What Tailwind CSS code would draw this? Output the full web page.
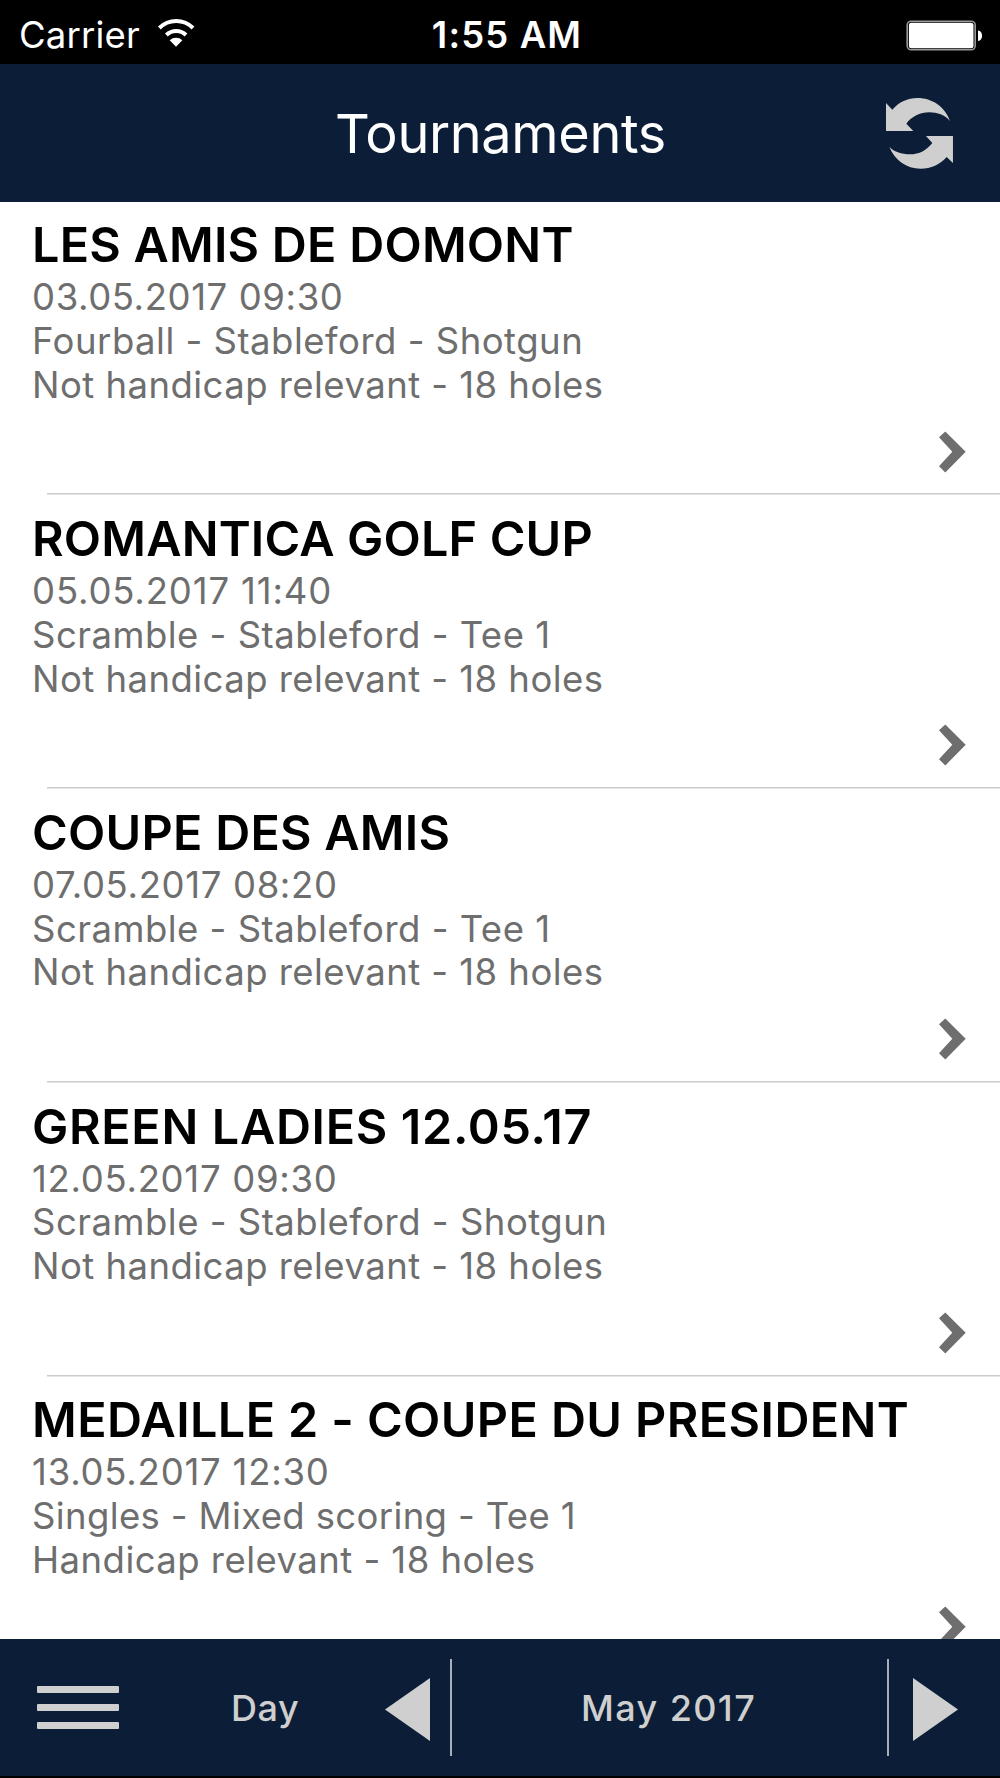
<!DOCTYPE html>
<html lang="en">
<head>
  <meta charset="UTF-8" />
  <meta name="viewport" content="width=device-width, initial-scale=1.0">
  <title>Tournaments</title>
  <script src="https://cdn.jsdelivr.net/npm/@tailwindcss/browser@4"></script>
</head>
<body class="bg-black">
  <div class="w-[1000px] h-[1778px] flex flex-col overflow-hidden bg-black font-['Inter','Liberation_Sans',sans-serif]">

    <!-- status bar -->
    <div class="h-16 shrink-0 grid grid-cols-[1fr_auto_1fr] items-center pl-[19px] pr-[17px] pb-[2px] text-white text-[36.5px] leading-[62px]">
      <div class="flex items-center gap-[17px]">
        <span class="tracking-[0.2px] pt-1">Carrier</span>
        <svg class="w-[38.7px] h-[29.3px]" viewBox="20 22 116 88" fill="none" stroke="#fff" stroke-width="12">
          <path d="M27 52A71 71 0 0 1 128 52" />
          <path d="M48 73A42 42 0 0 1 107 73" />
          <path d="M58 89A28 28 0 0 1 96 89L77 108Z" fill="#fff" stroke="none" />
        </svg>
      </div>
      <span class="font-semibold tracking-[1.13px] pt-1 ml-3">1:55 AM</span>
      <svg class="w-[77px] h-[31px] justify-self-end mt-1" viewBox="0 0 77 31">
        <rect x="1.2" y="1.2" width="68" height="28.6" rx="4" fill="none" stroke="#999" stroke-width="1.6" />
        <rect x="2.9" y="2.7" width="64.6" height="25.6" rx="2.5" fill="#fff" />
        <path d="M72 10.500C77.500 11 77.500 20.500 72 21Z" fill="#fff" />
      </svg>
    </div>

    <!-- title bar -->
    <header class="h-[137.5px] shrink-0 grid grid-cols-[1fr_auto_1fr] items-center pl-[47px] pr-[47px] bg-[#0c1e37]">
      <span></span>
      <h1 class="text-white text-[54px] leading-[64px] tracking-[-0.35px] ml-[1px] pt-[1.5px]">Tournaments</h1>
      <svg class="w-[67.3px] h-[71px] justify-self-end mt-[2px]" viewBox="78 54 202 213" fill="#cfcfcf">
        <path d="M78 69L97 89C118 66 142 54 173 54C215 54 255 79 270 123C255 105 232 97 208 97C180 97 155 110 139 131L160 153H78Z" />
        <path d="M279 249L260 231C240 254 213 266 182 266C140 266 103 240 88 200C100 214 125 223 150 223C178 223 200 211 217 189L198 168H279Z" />
      </svg>
    </header>

    <main id="list" class="h-[1437.5px] shrink-0 overflow-hidden bg-white"></main>

    <!-- toolbar -->
    <footer class="h-[137px] shrink-0 flex items-center bg-[#0c1e37] text-[#cfcfcf] text-[36px] font-medium">
      <div class="ml-[37px] w-[82px] flex flex-col gap-[11px]">
        <div class="h-[7.3px] rounded-[1px] bg-[#cfcfcf]"></div>
        <div class="h-[7.3px] rounded-[1px] bg-[#cfcfcf]"></div>
        <div class="h-[7.3px] rounded-[1px] bg-[#cfcfcf]"></div>
      </div>
      <span class="ml-[112px] w-[154px] tracking-[0.57px]">Day</span>
      <svg class="w-[45px] h-[63px] mt-[3px]" viewBox="0 0 45 63" fill="#cfcfcf"><path d="M0 31.5L45 0V63Z" /></svg>
      <div class="ml-5 w-[2px] h-[97px] bg-[#a9afb8]"></div>
      <span class="w-[435px] pl-[129px] tracking-[1.4px]">May 2017</span>
      <div class="w-[2px] h-[97px] bg-[#a9afb8]"></div>
      <svg class="ml-[23.5px] w-[45px] h-[63px] mt-[3px]" viewBox="0 0 45 63" fill="#cfcfcf"><path d="M45 31.5L0 0V63Z" /></svg>
    </footer>
  </div>

  <script>
    const tournaments = [
      {
        name: ["LES AMIS DE DOMONT", "tracking-[0.23px]"],
        date: ["03.05.2017 09:30", "tracking-[0.6px]"],
        mode: ["Fourball - Stableford - Shotgun", "tracking-[0.5px]"],
        info: "Not handicap relevant - 18 holes"
      },
      {
        name: ["ROMANTICA GOLF CUP", "tracking-[0.18px]"],
        date: ["05.05.2017 11:40", "tracking-[0.86px]"],
        mode: ["Scramble - Stableford - Tee 1", "tracking-[0.49px]"],
        info: "Not handicap relevant - 18 holes"
      },
      {
        name: ["COUPE DES AMIS", "tracking-[0.26px]"],
        date: ["07.05.2017 08:20", "tracking-[0.65px]"],
        mode: ["Scramble - Stableford - Tee 1", "tracking-[0.49px]"],
        info: "Not handicap relevant - 18 holes"
      },
      {
        name: ["GREEN LADIES 12.05.17", "tracking-[0.68px]"],
        date: ["12.05.2017 09:30", "tracking-[0.7px]"],
        mode: ["Scramble - Stableford - Shotgun", "tracking-[0.5px]"],
        info: "Not handicap relevant - 18 holes"
      },
      {
        name: ["MEDAILLE 2 - COUPE DU PRESIDENT", "tracking-[0.41px]"],
        date: ["13.05.2017 12:30", "tracking-[0.78px]"],
        mode: ["Singles - Mixed scoring - Tee 1", "tracking-[0.37px]"],
        info: "Handicap relevant - 18 holes"
      },
    ];

    const list = document.getElementById("list");

    tournaments.forEach(t => {
      const row = document.createElement("div");
      row.className = "h-[293.75px] flex flex-col justify-between";
      row.innerHTML = `
        <div class="flex-1 flex justify-between items-end pl-[32px] pr-[34px] pb-[20.6px]">
          <div class="self-start pt-[13.8px] text-[36.5px] leading-[43.8px] text-[#6e6e6e] whitespace-nowrap">
            <h2 class="text-[48.5px] leading-[60px] mb-[1px] font-semibold text-black ${t.name[1]}">${t.name[0]}</h2>
            <p class="${t.date[1]}">${t.date[0]}</p>
            <p class="${t.mode[1]}">${t.mode[0]}</p>
            <p class="tracking-[0.46px]">${t.info}</p>
          </div>
          <svg class="w-[27px] h-[42px] shrink-0" viewBox="0 0 27 42" fill="#6e6e6e">
            <path d="M0 6.2L6.3 0.5L26.7 20.7L6.3 41.5L0 35.2L13.3 20.7Z" />
          </svg>
        </div>
        <div class="ml-[47px] h-[2px] border-t border-b border-t-[#cbcbcf] border-b-[#e6e6e9]"></div>
      `;
      list.appendChild(row);
    });
  </script>
</body>
</html>
